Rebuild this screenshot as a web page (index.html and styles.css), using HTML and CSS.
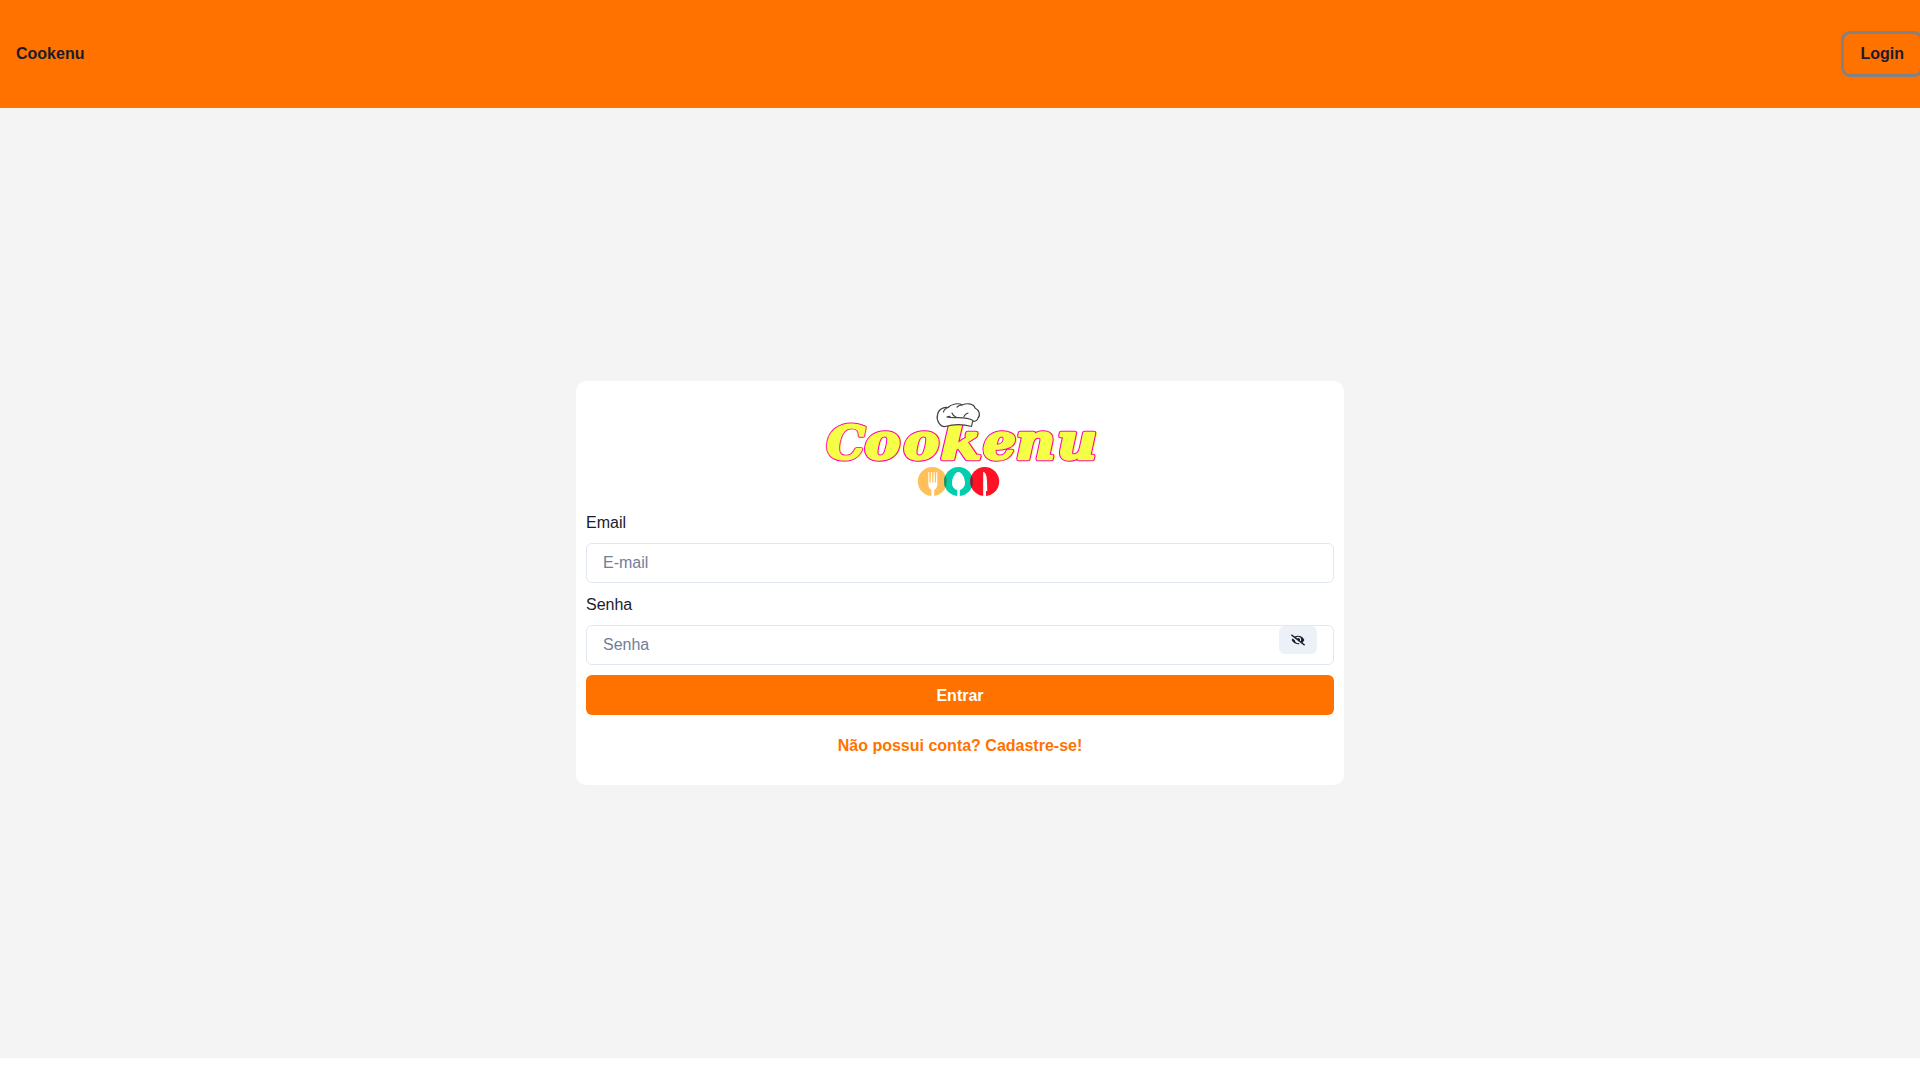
FILE: index.html
```html
<!DOCTYPE html>
<html lang="pt-BR">
<head>
<meta charset="utf-8">
<title>Cookenu</title>
<link rel="stylesheet" href="styles.css">
</head>
<body>
<header class="header">
  <button class="nav-button" type="button">Cookenu</button>
  <button class="nav-button nav-button--focus" type="button">Login</button>
</header>
<main class="main">
  <form class="card">
    <svg class="logo" width="300" height="100" viewBox="0 0 300 100" role="img" aria-label="Cookenu">
      <defs>
        <g id="letters">
          <text transform="translate(16.500 57.700) scale(.95 .93)">C</text>
          <text transform="translate(54.500 57.700) scale(1.050 1)">o</text>
          <text transform="translate(93.500 57.700) scale(1.050 1)">o</text>
          <text transform="translate(130.500 57.700) scale(1.170 1)">k</text>
          <text transform="translate(173 57.700) scale(1.020 1)">e</text>
          <text transform="translate(205.500 57.700) scale(1.080 1)">n</text>
          <text transform="translate(247 57.700) scale(1.080 1)">u</text>
        </g>
      </defs>
      <use class="wordmark wordmark--halo" href="#letters" x="1" y="0.5"/>
      <use class="wordmark wordmark--edge" href="#letters"/>
      <use class="wordmark wordmark--fill" href="#letters"/>
      <g class="hat">
        <path d="M135 25.500C130 26 126 19 127.500 14C128 9 133 5.500 138 6.500C141 3 149 1.500 152 4C158 1.500 164 3 165 7C169 9 171 14 168 17C167.500 20 165 20.500 162.500 20.500L161.500 25.500C153 23 144 23 135 25.500Z"/>
        <path d="M137 16C144 18 155 14.500 163 19.500M142 12Q143 15 146 16M158 12Q155 13 154 15.500M137 16Q139 15 140 15.500M138 6.500Q134 8 133.500 11M152 4Q149 4 147 6"/>
      </g>
      <g transform="translate(10 0)">
        <circle cx="112.300" cy="80.500" r="14.500" fill="#ffc059"/>
        <circle cx="138.500" cy="80.500" r="14.500" fill="#00cead"/>
        <circle cx="164.700" cy="80.500" r="14.500" fill="#ff1126"/>
        <path d="M125.400 74.300Q128.200 80.500 125.400 86.700Q122.600 80.500 125.400 74.300Z" fill="#308b50"/>
        <path d="M151.600 74.300Q154.400 80.500 151.600 86.700Q148.800 80.500 151.600 74.300Z" fill="#6b2b3c"/>
        <g fill="#fff">
          <path d="M108.300 71H109.300L109.600 81.500H110.700L111 71H112L112.300 81.500H113.300L113.600 71H114.600L114.900 81.500H116L116.300 71H117.300V83Q117.300 87 114.200 89V95.500H111.400V89Q108.300 87 108.300 83Z"/>
          <path d="M138.500 71C142 71 145 77 145 82C145 86 142 88.500 139.800 89V95.500H137.200V89C134.500 88.500 132 86 132 82C132 77 135 71 138.500 71Z"/>
          <path d="M163.200 71Q166.500 71 167 80L167.300 90H166V95.500H163.200Z"/>
        </g>
      </g>
    </svg>
    <div class="field">
      <label class="label" for="email">Email</label>
      <input class="input" id="email" type="email" placeholder="E-mail">
    </div>
    <div class="field">
      <label class="label" for="password">Senha</label>
      <div class="input-group">
        <input class="input" id="password" type="password" placeholder="Senha">
        <button class="reveal" type="button" aria-label="Mostrar senha">
          <svg width="14" height="14" viewBox="0 0 640 512" fill="currentColor"><path d="M320 400c-75.850 0-137.250-58.710-142.900-133.110L72.200 185.820c-13.790 17.300-26.480 35.590-36.720 55.590a32.350 32.350 0 0 0 0 29.190C89.710 376.410 197.070 448 320 448c26.910 0 52.870-4 77.890-10.460L346 397.390a144.130 144.130 0 0 1-26 2.610zm313.820 58.100l-110.550-85.440a331.250 331.250 0 0 0 81.250-102.070 32.350 32.350 0 0 0 0-29.190C550.290 135.590 442.930 64 320 64a308.150 308.150 0 0 0-147.320 37.700L45.460 3.370A16 16 0 0 0 23 6.180L3.370 31.450A16 16 0 0 0 6.180 53.900l588.360 454.730a16 16 0 0 0 22.460-2.810l19.640-25.270a16 16 0 0 0-2.820-22.450zm-183.720-142l-39.300-30.380A94.750 94.750 0 0 0 416 256a94.760 94.760 0 0 0-121.310-92.210A47.650 47.650 0 0 1 304 192a46.640 46.640 0 0 1-1.540 10l-73.610-56.890A142.310 142.310 0 0 1 320 112a143.920 143.920 0 0 1 144 144c0 21.630-5.290 41.790-13.900 60.110z"/></svg>
        </button>
      </div>
    </div>
    <button class="submit" type="button">Entrar</button>
    <button class="signup" type="button">Não possui conta? Cadastre-se!</button>
  </form>
</main>
</body>
</html>
```
FILE: styles.css
```css
*, *::before, *::after {
  box-sizing: border-box;
}

body {
  margin: 0;
  background: #fff;
  color: #1a1c2c;
  font: 16px/24px "Liberation Sans", Arial, sans-serif;
}

button, input {
  margin: 0;
  font: inherit;
  color: inherit;
}

button {
  border: 0;
  border-radius: 6px;
  background: transparent;
  font-weight: 700;
}

.header {
  display: flex;
  align-items: center;
  justify-content: space-between;
  height: 108px;
  background: #ff7200;
  overflow: hidden;
}

.nav-button {
  height: 40px;
  padding: 0 16px;
}

.nav-button--focus {
  box-shadow: 0 0 0 3px #828284;
}

.main {
  display: flex;
  align-items: center;
  justify-content: center;
  height: 950px;
  background: #f4f4f4;
}

.card {
  display: flex;
  flex-direction: column;
  gap: 10px;
  width: 768px;
  padding: 20px 10px;
  border-radius: 10px;
  background: #fff;
}

.logo {
  align-self: center;
  overflow: visible;
}

.wordmark {
  font: italic 700 51px "DejaVu Serif", serif;
  stroke-linejoin: round;
}

.wordmark--halo {
  fill: #f5ff45;
  stroke: #f5ff45;
  stroke-width: 4px;
}

.wordmark--edge {
  fill: #ff00b8;
  stroke: #ff00b8;
  stroke-width: 4.4px;
}

.wordmark--fill {
  fill: #f5ff45;
  stroke: #f5ff45;
  stroke-width: 2.4px;
}

.hat {
  fill: #fff;
  stroke: #45423c;
  stroke-width: 1.2px;
  stroke-linejoin: round;
  stroke-linecap: round;
}

.field {
  display: flex;
  flex-direction: column;
  gap: 8px;
}

.input {
  display: block;
  width: 100%;
  height: 40px;
  padding: 0 16px;
  border: 1px solid #e1e7f1;
  border-radius: 6px;
  background: #fff;
}

.input::placeholder {
  color: #727e99;
  opacity: 1;
}

.input-group {
  position: relative;
}

.reveal {
  position: absolute;
  top: 1px;
  right: 17px;
  display: flex;
  align-items: center;
  justify-content: center;
  width: 38px;
  height: 28px;
  padding: 0;
  background: #ecf0f7;
}

.submit {
  height: 40px;
  padding-top: 2px;
  background: #ff7200;
  color: #fff;
}

.signup {
  align-self: center;
  height: 40px;
  padding-top: 2px;
  color: #ff7200;
}
```
